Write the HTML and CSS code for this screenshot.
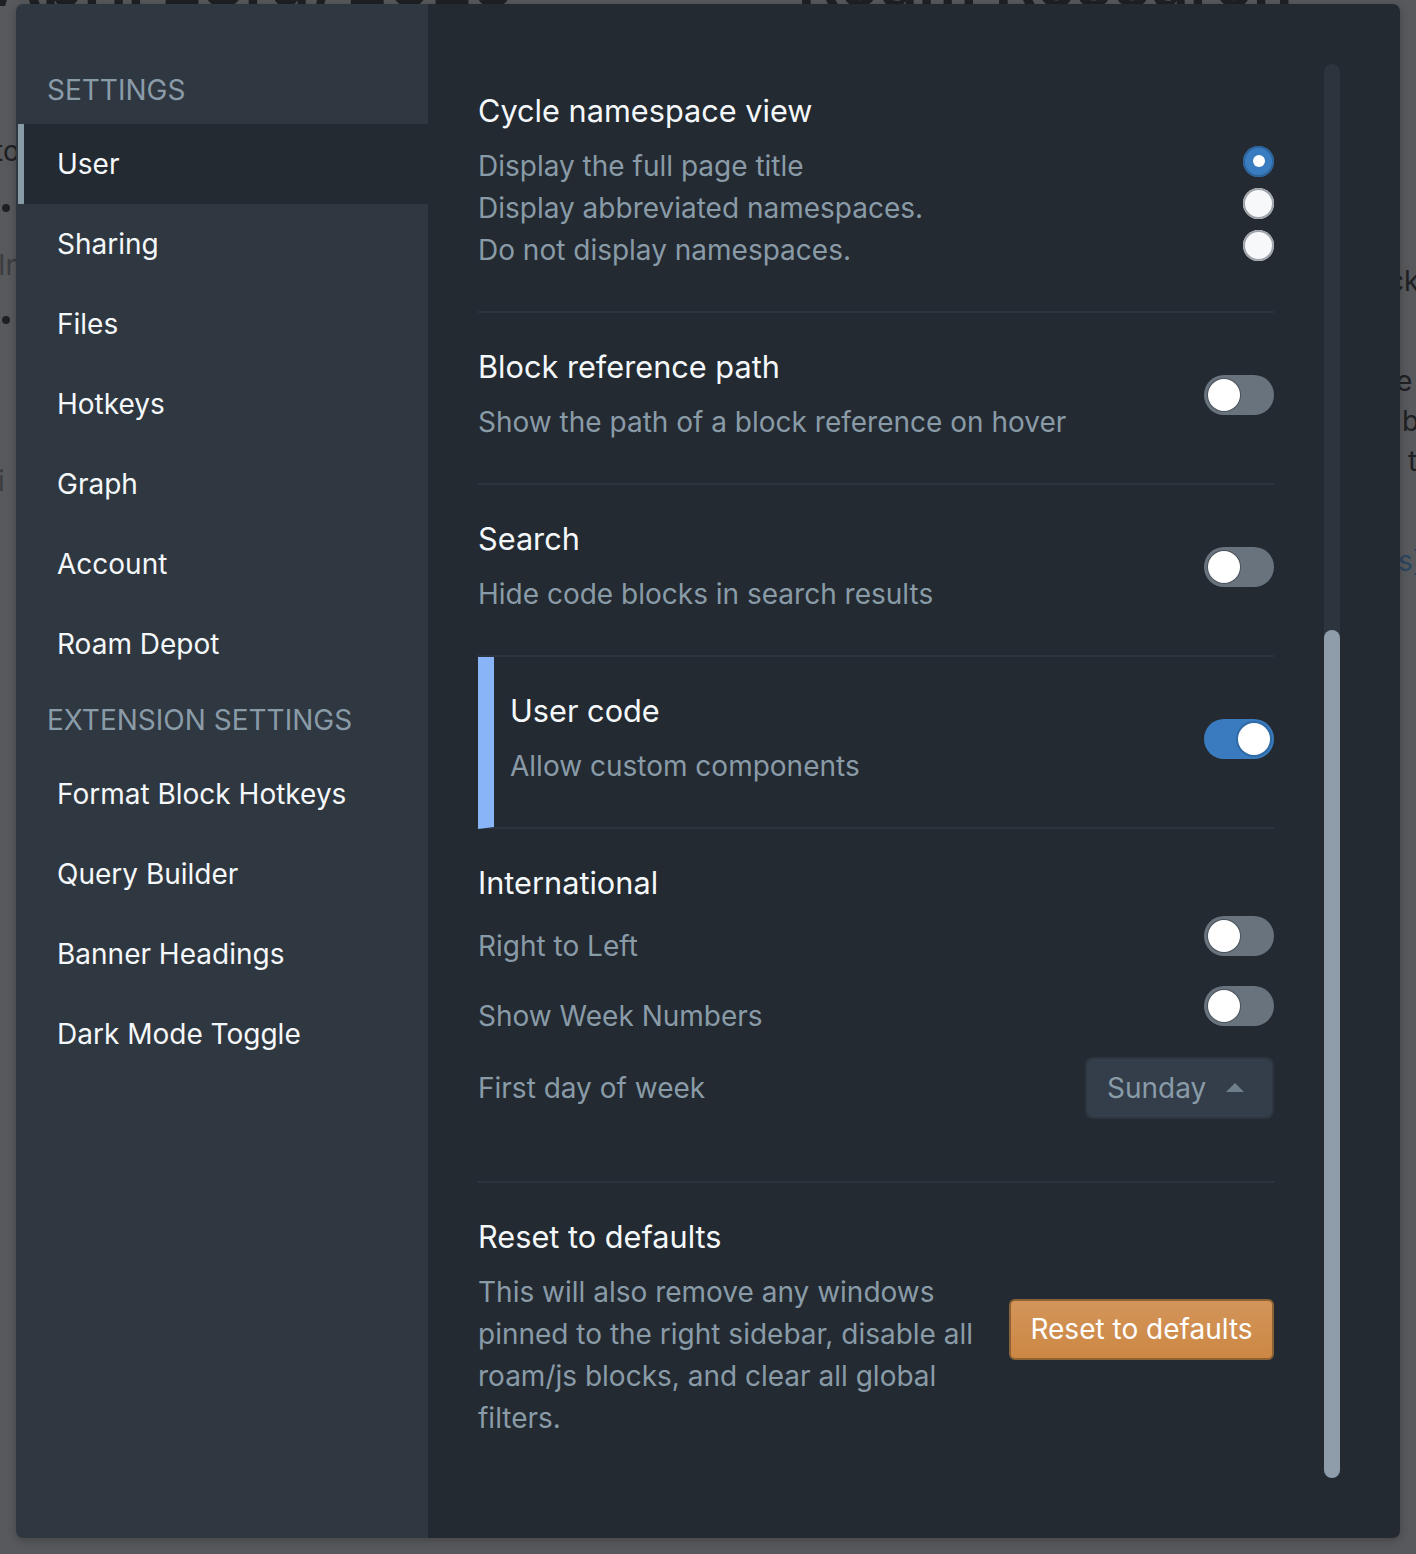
FILE: index.html
```html
<!DOCTYPE html>
<html lang="en">
<head>
<meta charset="utf-8">
<title>Settings</title>
<link rel="stylesheet" href="styles.css">
</head>
<body>
<div class="page">
  <div class="page-title">April 23rd, 2025 <span class="gap"></span> Roam Research</div>
  <div class="frag f1">to</div>
  <div class="frag dot d1"></div>
  <div class="frag f2">In</div>
  <div class="frag dot d2"></div>
  <div class="frag f3">i</div>
  <div class="frag r1">ck</div>
  <div class="frag r2">e</div>
  <div class="frag r3">b</div>
  <div class="frag r4">t</div>
  <div class="frag r5">s]</div>
</div>

<div class="dialog">
  <nav class="sidebar">
    <div class="nav-header first">SETTINGS</div>
    <div class="nav-item active">User</div>
    <div class="nav-item">Sharing</div>
    <div class="nav-item">Files</div>
    <div class="nav-item">Hotkeys</div>
    <div class="nav-item">Graph</div>
    <div class="nav-item">Account</div>
    <div class="nav-item">Roam Depot</div>
    <div class="nav-header ext">EXTENSION SETTINGS</div>
    <div class="nav-item">Format Block Hotkeys</div>
    <div class="nav-item">Query Builder</div>
    <div class="nav-item">Banner Headings</div>
    <div class="nav-item">Dark Mode Toggle</div>
  </nav>

  <main class="content">
    <div class="column">
      <section class="section">
        <div class="title">Cycle namespace view</div>
        <div class="options">
          <div class="option"><span class="desc">Display the full page title</span><span class="radio checked"></span></div>
          <div class="option"><span class="desc">Display abbreviated namespaces.</span><span class="radio"></span></div>
          <div class="option"><span class="desc">Do not display namespaces.</span><span class="radio"></span></div>
        </div>
      </section>

      <section class="section row">
        <div class="text">
          <div class="title">Block reference path</div>
          <div class="desc sub">Show the path of a block reference on hover</div>
        </div>
        <span class="switch"><span class="knob"></span></span>
      </section>

      <section class="section row">
        <div class="text">
          <div class="title">Search</div>
          <div class="desc sub">Hide code blocks in search results</div>
        </div>
        <span class="switch"><span class="knob"></span></span>
      </section>

      <section class="section row highlight">
        <div class="text">
          <div class="title">User code</div>
          <div class="desc sub">Allow custom components</div>
        </div>
        <span class="switch on"><span class="knob"></span></span>
      </section>

      <section class="section intl">
        <div class="title">International</div>
        <div class="intl-rows">
          <div class="intl-row"><span class="desc">Right to Left</span><span class="switch"><span class="knob"></span></span></div>
          <div class="intl-row"><span class="desc">Show Week Numbers</span><span class="switch"><span class="knob"></span></span></div>
          <div class="intl-row tall"><span class="desc">First day of week</span>
            <span class="select">Sunday<span class="caret"></span></span>
          </div>
        </div>
      </section>

      <section class="section row last">
        <div class="text">
          <div class="title">Reset to defaults</div>
          <div class="desc para">This will also remove any windows pinned to the right sidebar, disable all roam/js blocks, and clear all global filters.</div>
        </div>
        <button class="reset">Reset to defaults</button>
      </section>
    </div>
    <div class="scroll-track"><div class="scroll-thumb"></div></div>
  </main>
</div>
</body>
</html>
```

FILE: styles.css
```css
* { box-sizing: border-box; }

html, body {
  margin: 0;
  height: 1554px;
  overflow: hidden;
}

body {
  background: #58595c;
  font-family: Inter, "Noto Sans", sans-serif;
  padding: 4px 16px 16px 16px;
  position: relative;
}

/* dimmed page behind the dialog */
.page {
  position: absolute;
  inset: 0;
  color: #1e2023;
  font-size: 28px;
  z-index: 0;
}
.page-title {
  position: absolute;
  top: -58px;
  left: -6px;
  font-size: 66px;
  font-weight: 600;
  white-space: nowrap;
}
.page-title .gap { display: inline-block; width: 250px; }
.frag { position: absolute; }
.f1 { left: -6px; top: 134px; }
.f2 { left: -2px; top: 248px; color: #3b3d40; }
.f3 { left: -2px; top: 464px; color: #3b3d40; }
.dot { width: 8px; height: 8px; border-radius: 50%; background: #1e2023; left: 2px; }
.d1 { top: 204px; }
.d2 { top: 316px; }
.r1 { left: 1388px; top: 264px; }
.r2 { left: 1396px; top: 364px; }
.r3 { left: 1402px; top: 404px; }
.r4 { left: 1408px; top: 444px; }
.r5 { left: 1398px; top: 544px; color: #2b4560; }

.dialog {
  position: relative;
  z-index: 1;
  width: 1384px;
  height: 1534px;
  display: flex;
  border-radius: 7px;
  overflow: hidden;
  box-shadow: 0 2px 10px rgba(0,0,0,0.25);
}

/* sidebar */
.sidebar {
  width: 412px;
  flex: none;
  background: #2f3741;
}
.nav-header {
  color: #8a9ba8;
  font-size: 28px;
  padding-left: 31px;
}
.nav-header.first {
  height: 120px;
  line-height: 32px;
  padding-top: 70px;
}
.nav-header.ext {
  height: 70px;
  line-height: 68px;
  padding-top: 2px;
}
.nav-item {
  height: 80px;
  line-height: 80px;
  padding-left: 41px;
  font-size: 28px;
  color: #f5f8fa;
}
.nav-item.active {
  background: #232a31;
  margin-left: 2px;
  border-left: 6px solid #8a9ba8;
  padding-left: 33px;
}

/* content */
.content {
  flex: 1;
  background: #232a31;
  position: relative;
  padding: 53px 0 0 50px;
}
.column {
  width: 796px;
}
.section {
  padding: 36px 0 40px 0;
  border-bottom: 2px solid #2c353f;
}
.row {
  display: flex;
  align-items: center;
  justify-content: space-between;
  padding-bottom: 42px;
}
.title {
  color: #f5f8fa;
  font-size: 30.7px;
  line-height: 36px;
}
.desc {
  color: #8a9ba8;
  font-size: 28px;
}
.sub {
  margin-top: 18px;
  line-height: 38px;
}

.options { margin-top: 16px; }
.option {
  display: flex;
  justify-content: space-between;
  align-items: center;
  height: 42px;
  line-height: 42px;
}
.radio {
  width: 31px;
  height: 31px;
  border-radius: 50%;
  background: #f6f8fa;
  box-shadow: inset 0 0 0 2px #9ea4a9;
  margin-top: -10px;
  position: relative;
}
.radio.checked {
  background: #3a7cc0;
  box-shadow: inset 0 0 0 2px #2e649c;
}
.radio.checked::after {
  content: "";
  position: absolute;
  width: 12px;
  height: 12px;
  border-radius: 50%;
  background: #ffffff;
  left: 9.5px;
  top: 9.5px;
}

.switch {
  width: 70px;
  height: 40px;
  border-radius: 20px;
  background: #68737e;
  position: relative;
  flex: none;
}
.switch .knob {
  position: absolute;
  left: 4px;
  top: 4px;
  width: 32px;
  height: 32px;
  border-radius: 50%;
  background: #ffffff;
  box-shadow: 0 0 0 1px rgba(16,22,26,0.35);
}
.switch.on {
  background: #3a7bbf;
}
.switch.on .knob {
  left: 34px;
  box-shadow: 0 0 0 2px #2f6aa6;
}

.highlight {
  border-left: 16px solid #8ab4f8;
  padding-left: 16px;
}

.intl { padding-bottom: 56px; }
.intl-rows { margin-top: 10px; }
.intl-row {
  display: flex;
  justify-content: space-between;
  align-items: flex-start;
  height: 70px;
  line-height: 70px;
}
.intl-row .switch { margin-top: 5px; }
.intl-row.tall {
  height: 74px;
  line-height: 74px;
}
.select {
  margin-top: 6px;
  width: 189px;
  height: 62px;
  border-radius: 8px;
  background: #333e4a;
  border: 2px solid #2c3540;
  color: #8a9ba8;
  font-size: 28px;
  line-height: 58px;
  padding-left: 20px;
  position: relative;
}
.caret {
  position: absolute;
  right: 28px;
  top: 24px;
  width: 0;
  height: 0;
  border-left: 9px solid transparent;
  border-right: 9px solid transparent;
  border-bottom: 9px solid #6f7e8b;
}

.last { border-bottom: none; }
.para {
  width: 510px;
  margin-top: 16px;
  line-height: 42px;
}
.reset {
  width: 265px;
  height: 61px;
  border-radius: 6px;
  border: 2px solid #8c6234;
  background: linear-gradient(#d3955a, #cc8744);
  color: #ffffff;
  font-family: Inter, "Noto Sans", sans-serif;
  font-size: 28px;
  padding: 0;
  flex: none;
}

.scroll-track {
  position: absolute;
  right: 60px;
  top: 60px;
  bottom: 60px;
  width: 16px;
  border-radius: 8px;
  background: #2c343e;
}
.scroll-thumb {
  position: absolute;
  left: 0;
  right: 0;
  top: 566px;
  bottom: 0;
  border-radius: 8px;
  background: #8f9daa;
}
```
